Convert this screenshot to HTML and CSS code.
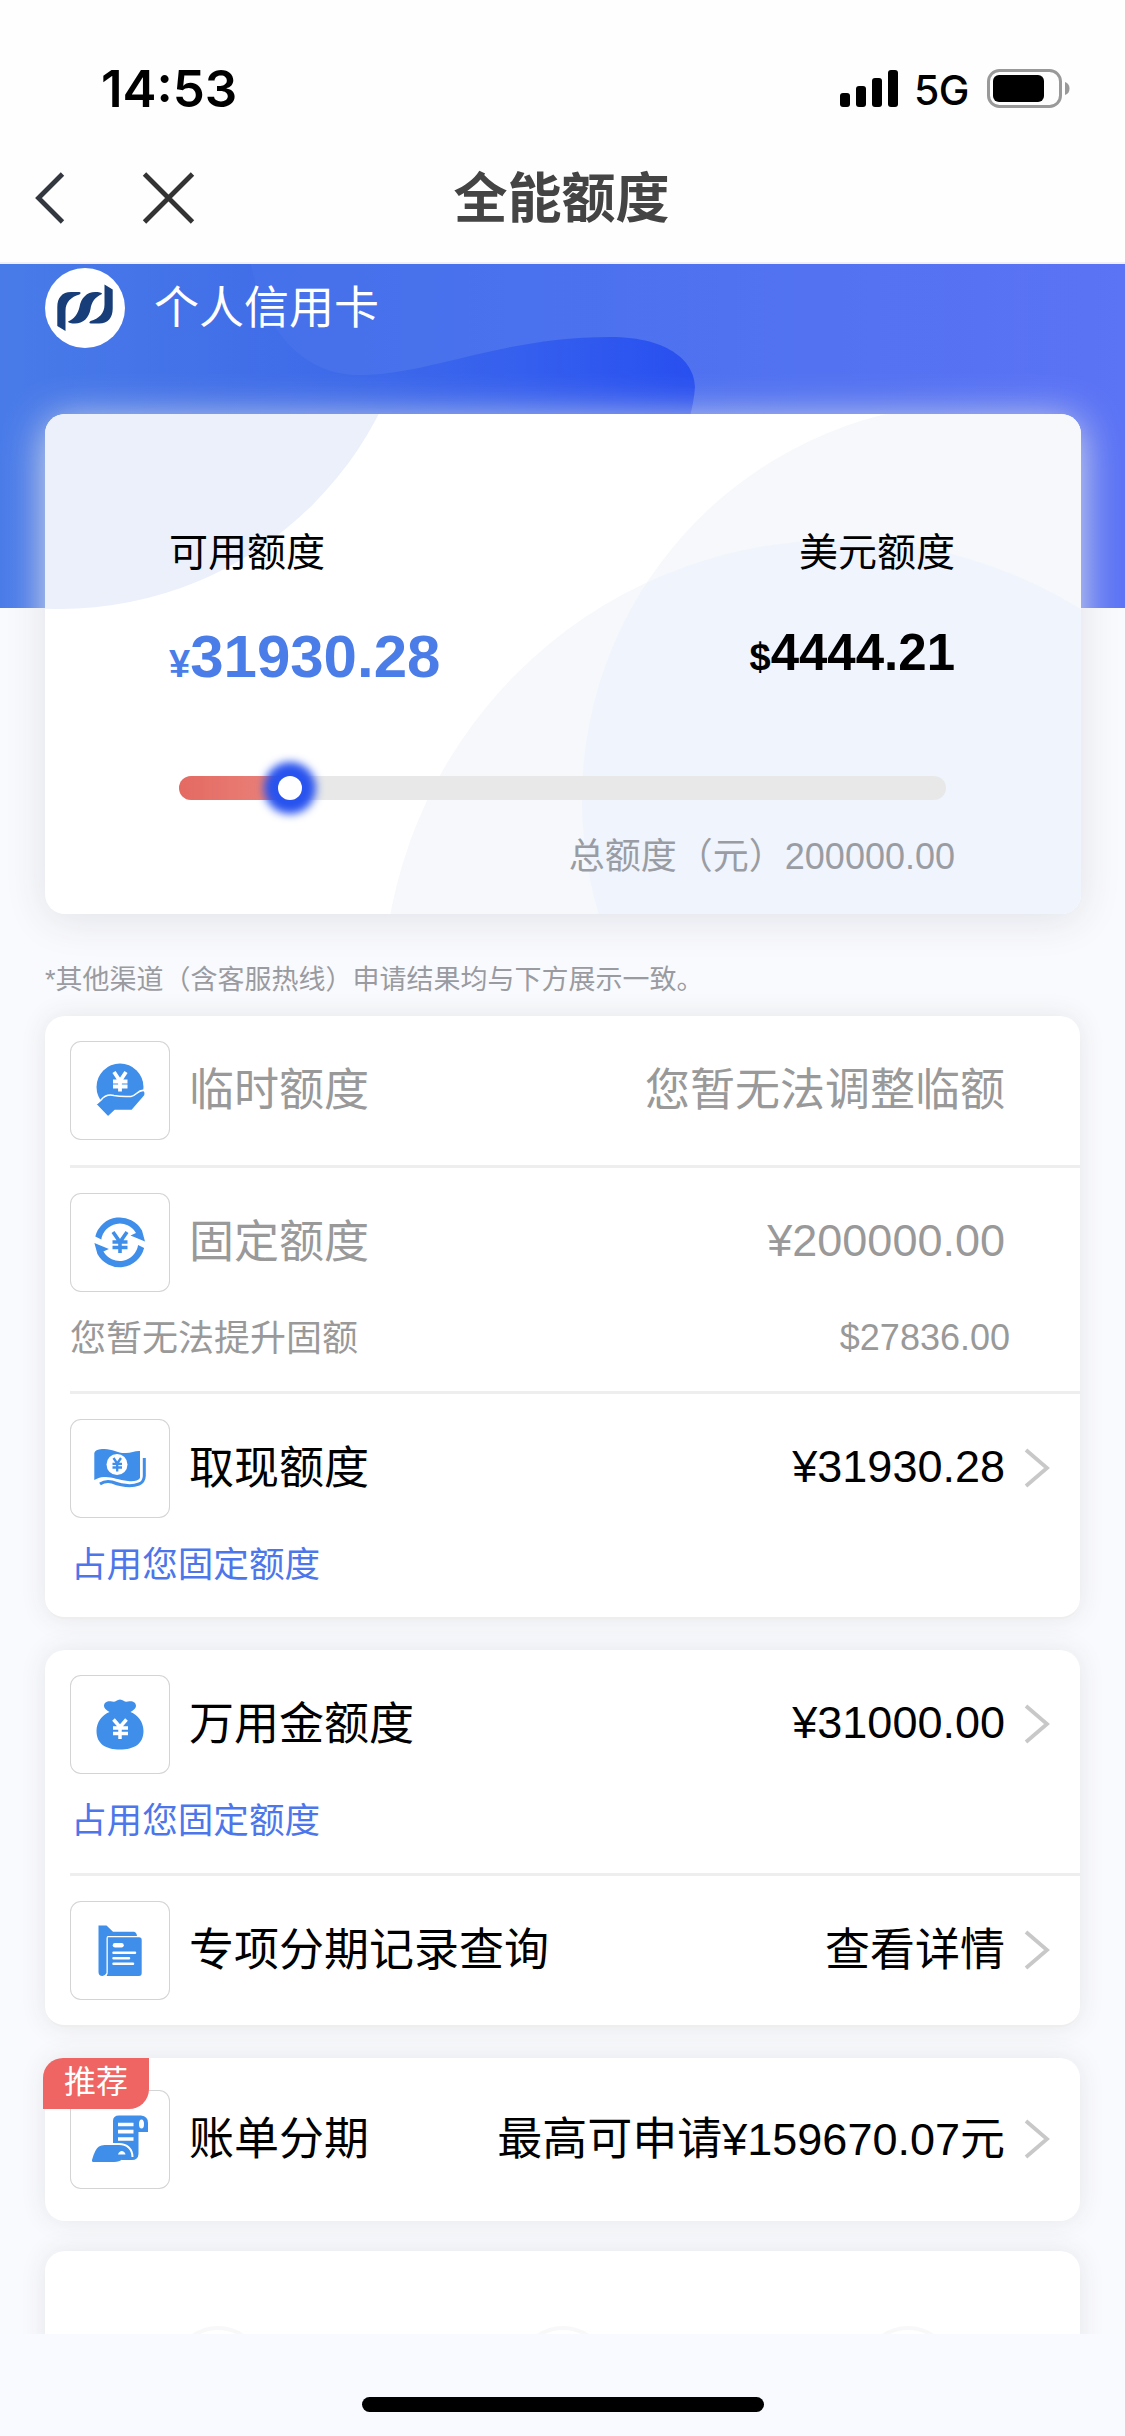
FILE: index.html
```html
<!DOCTYPE html>
<html lang="zh-CN">
<head>
<meta charset="utf-8">
<title>全能额度</title>
<link rel="stylesheet" href="styles.css">
</head>
<body>
<div class="screen">
  <header class="top">
    <div class="status">
      <span class="time">14:53</span>
      <div class="status-right">
        <svg class="signal" width="58" height="38" viewBox="0 0 58 38">
          <rect x="0" y="23" width="10" height="14" rx="3"/><rect x="16" y="16" width="10" height="21" rx="3"/>
          <rect x="32" y="8" width="10" height="29" rx="3"/><rect x="48" y="0" width="10" height="37" rx="3"/>
        </svg>
        <span class="net">5G</span>
        <svg class="battery" width="84" height="40" viewBox="0 0 84 40">
          <rect x="1.500" y="1.500" width="72" height="36" rx="11" fill="none" stroke="#999" stroke-width="3"/>
          <rect x="6" y="6" width="51" height="27" rx="6"/>
          <path d="M78 13q4.500 1.500 4.500 6.500t-4.500 6.500z" fill="#999"/>
        </svg>
      </div>
    </div>
    <nav class="nav">
      <svg class="nav-icons" width="162" height="52" viewBox="0 0 162 52" fill="none" stroke="#333740" stroke-width="4.800">
        <path d="M29.500 2L5.500 26L29.500 50"/><path d="M111.500 2L159.500 50M159.500 2L111.500 50" stroke="#333"/>
      </svg>
      <h1 class="title">全能额度</h1>
      <span class="nav-space"></span>
    </nav>
  </header>

  <main class="content">
    <section class="hero">
      <svg class="hero-bg" width="1125" height="344" viewBox="0 264 1125 344">
        <defs>
          <linearGradient id="deep" gradientUnits="userSpaceOnUse" x1="0" x2="694" y1="0" y2="0"><stop offset="0" stop-color="#497be8"/><stop offset=".5" stop-color="#3e6ae9"/><stop offset=".75" stop-color="#355fee"/><stop offset="1" stop-color="#284ff0"/></linearGradient>
          <linearGradient id="soft" gradientUnits="userSpaceOnUse" x1="250" x2="1125" y1="0" y2="0"><stop offset="0" stop-color="#4571ea"/><stop offset=".3" stop-color="#4a71ee"/><stop offset="1" stop-color="#5b73f5"/></linearGradient>
        </defs>
        <rect y="264" width="1125" height="344" fill="url(#deep)"/>
        <path fill="url(#soft)" d="M251 264C262 325 300 375 359 375C430 375 500 337 610 337C672 337 695 364 695 387Q694 402 689 420L660 608H1125V264Z"/>
      </svg>
      <div class="brand">
        <svg class="logo" width="80" height="80" viewBox="0 0 80 80">
          <circle cx="40" cy="40" r="40" fill="#fff"/>
          <g fill="#173e78">
            <path d="M12.300 58V39C12.300 30 17 24 26 24H34Q37 24.500 34.500 26.500C26 29 20.500 34 20.500 43V63Z"/>
            <path d="M12.300 58V39C12.300 30 17 24 26 24H34Q37 24.500 34.500 26.500C26 29 20.500 34 20.500 43V63Z" transform="rotate(180 40 39.800)"/>
            <path d="M23 53.500C29 51 33 46 34.500 39C36 30 42 24 50 24C54 24 57 24.500 57 26C50 29 46.500 34 45.500 41C44 50 38 55.500 30 55.500C26 55.500 23.500 55 23 53.500Z"/>
          </g>
        </svg>
        <span class="brand-name">个人信用卡</span>
      </div>
      <div class="limit">
        <svg class="limit-bg" width="1036" height="500" viewBox="45 414 1036 500">
          <clipPath id="lens"><circle cx="979" cy="800" r="397"/></clipPath>
          <circle cx="60" cy="251" r="358" fill="#ebf0fb"/>
          <circle cx="979" cy="800" r="397" fill="#f6f8fb"/>
          <circle cx="839" cy="996" r="456" fill="#f6f8fc"/>
          <circle cx="839" cy="996" r="456" fill="#f0f4fd" clip-path="url(#lens)"/>
        </svg>
        <div class="limit-body">
          <div class="amounts">
            <div class="amount"><span class="amount-label">可用额度</span><span class="money cny"><small>¥</small>31930.28</span></div>
            <div class="amount right"><span class="amount-label">美元额度</span><span class="money usd"><small>$</small>4444.21</span></div>
          </div>
          <div class="track"><div class="used"></div><div class="knob"></div></div>
          <p class="total">总额度（元）200000.00</p>
        </div>
      </div>
    </section>

    <p class="note">*其他渠道（含客服热线）申请结果均与下方展示一致。</p>

    <section class="card">
      <div class="row muted">
        <div class="line">
          <svg class="icon" viewBox="0 0 100 99">
            <circle cx="50" cy="46" r="23.500"/>
            <path class="w" d="M44 31L50 40L56 31M50 40V50.500M43 40.500H57.500M43 45.500H57.500" stroke-width="3.800"/>
            <path d="M26 63.500L31 59C35 54 40 53.500 44 54.500C51 56 56 55.500 61 55.500C66 55 68 48.500 74 49.500Q76 51 75 54.500L62 69.500H45L38 76Z" stroke="#fff" stroke-width="1.600"/>
          </svg>
          <span class="label">临时额度</span><span class="value">您暂无法调整临额</span>
        </div>
      </div>
      <div class="row muted">
        <div class="line">
          <svg class="icon" viewBox="0 0 100 99">
            <path d="M25.300 43.500A25.300 25.300 0 0 1 72 37.500L75 48.500L60.500 42.500L66 40A18.700 18.700 0 0 0 31.300 46.500Z"/>
            <path d="M25.300 43.500A25.300 25.300 0 0 1 72 37.500L75 48.500L60.500 42.500L66 40A18.700 18.700 0 0 0 31.300 46.500Z" transform="rotate(180 49.700 49.300)"/>
            <path class="b" d="M43 39L50 49L57 39M50 49V60M42.500 49H57.500M42.500 54.500H57.500" stroke-width="3.600"/>
          </svg>
          <span class="label">固定额度</span><span class="value num">¥200000.00</span>
        </div>
        <div class="sub"><span>您暂无法提升固额</span><span class="usd-sub">$27836.00</span></div>
      </div>
      <div class="row">
        <div class="line">
          <svg class="icon" viewBox="0 0 100 99">
            <path d="M24.300 34Q25 30.500 32 30C42 29 47 34.500 56 34C61 34 66 31.500 70 32V59Q67 63 58 62C48 61 42 57.500 34 58C30 58 27 59.500 24.300 61Z"/>
            <circle cx="47" cy="45.500" r="10.500" fill="#fff"/>
            <path class="b" d="M43.500 39L47.200 44.500L51 39M47.200 44.500V52.500M42.500 44.800H52M42.500 48.500H52" stroke-width="2.300"/>
            <path class="b" d="M74.300 39V57Q74 63 69 65C59 69 46 64.500 42 63C36 61.500 33 63 30 65" stroke-width="3"/>
          </svg>
          <span class="label">取现额度</span><span class="value num">¥31930.28</span>
          <svg class="go" viewBox="0 0 26 40"><path d="M2 2L23 20L2 38"/></svg>
        </div>
        <div class="sub link"><span>占用您固定额度</span></div>
      </div>
    </section>

    <section class="card">
      <div class="row">
        <div class="line">
          <svg class="icon" viewBox="0 0 100 99">
            <path d="M39.500 37C36 35 34 33 34 31C34 27 38 25.500 42 26.500Q45 27 46 26Q50 23 54 26Q55 27 58 26.500C62 25.500 66 27 66 31C66 33 64 35 60.500 37C68 40 73.500 47 73.500 56C73.500 69 64 74.500 50 74.500S26.500 69 26.500 56C26.500 47 32 40 39.500 37Z"/>
            <path class="w" d="M43.500 44.500L50 52L56.500 44.500M50 52V64M43 53H58M43 58.500H58" stroke-width="3.500"/>
          </svg>
          <span class="label">万用金额度</span><span class="value num">¥31000.00</span>
          <svg class="go" viewBox="0 0 26 40"><path d="M2 2L23 20L2 38"/></svg>
        </div>
        <div class="sub link"><span>占用您固定额度</span></div>
      </div>
      <div class="row">
        <div class="line">
          <svg class="icon" viewBox="0 0 100 99">
            <path d="M28.500 24.500H36.500L43 30.700H64Q66.500 31 67 35H38Q36.500 35 36.500 38V72Q35 75 32.500 75Q28.500 75 28.500 71Z"/>
            <path d="M37.800 36.200H69Q71.700 36.200 71.700 39V72Q71.700 75 69 75H36.500Q38 73 37.800 71Z"/>
            <path class="w" d="M45 44.300H51.500" stroke-width="4.500" stroke-linecap="round"/>
            <path class="w" d="M43.500 51.700H65M43.500 57.300H59M43.500 62.800H63" stroke-width="2.500" stroke-linecap="round"/>
          </svg>
          <span class="label">专项分期记录查询</span><span class="value">查看详情</span>
          <svg class="go" viewBox="0 0 26 40"><path d="M2 2L23 20L2 38"/></svg>
        </div>
      </div>
    </section>

    <section class="card single">
      <span class="tag">推荐</span>
      <div class="row">
        <div class="line">
          <svg class="icon" viewBox="0 0 100 99">
            <path d="M43 31Q43 25.500 49 25.500H71Q78 26 78 33V42H68.500V64Q68 70 62 70H52L43 57Z"/>
            <path d="M22 70Q25 59 29 56.500Q31 55 35 55H50C58 55 62 60 62 66.500C60 64.500 57 66 54 68Q50 72 44 72H24Q21.500 72 22 70Z"/>
            <path d="M43 54H49C57 54 62.500 59 62.500 67" fill="none" stroke="#fff" stroke-width="2"/>
            <path d="M48 64.500Q49 61 52 61Q55 61.500 55.500 64.500Z" fill="#fff"/>
            <path class="w" d="M48 34.500H63.500M48 41.700H63.500M48 49H63.500" stroke-width="3.700"/>
            <ellipse cx="71.500" cy="34" rx="2.500" ry="4.500" fill="#fff"/>
          </svg>
          <span class="label">账单分期</span><span class="value">最高可申请¥159670.07元</span>
          <svg class="go" viewBox="0 0 26 40"><path d="M2 2L23 20L2 38"/></svg>
        </div>
      </div>
    </section>

    <section class="card steps"><i></i><i></i><i></i></section>
  </main>
  <footer class="home"><div class="bar"></div></footer>
</div>
</body>
</html>
```
FILE: styles.css
```css
* { box-sizing: border-box; }
body {
  margin: 0;
  background: #f9fafd;
  color: #000;
  font-family: "Liberation Sans", "Noto Sans CJK SC", sans-serif;
}
h1, p { margin: 0; }
svg { display: block; flex: none; }
.screen { width: 1125px; height: 2436px; display: flex; flex-direction: column; overflow: hidden; }

.top { height: 264px; flex: none; background: #fefefe; border-bottom: 2px solid #f2eff8; }
.status { height: 132px; padding: 45px 54px 0 101px; display: flex; justify-content: space-between; align-items: center; font-family: Inter, sans-serif; }
.time { font-size: 51px; font-weight: 600; line-height: 60px; }
.status-right { display: flex; align-items: center; height: 60px; }
.net { font-size: 41px; font-weight: 500; line-height: 60px; margin: 2px 0 0 16px; width: 73px; letter-spacing: -0.5px; }
.nav { height: 132px; padding: 0 33px; display: flex; align-items: center; justify-content: space-between; }
.nav-space { width: 164px; }
.title { font-size: 54px; font-weight: 600; line-height: 80px; color: #444; margin-top: 2px; }

.content { height: 2070px; flex: none; overflow: hidden; }
.hero { position: relative; height: 650px; }
.hero-bg { position: absolute; left: 0; top: 0; }
.brand { position: relative; height: 150px; padding: 4px 45px 0; display: flex; align-items: flex-start; gap: 29px; }
.brand-name { color: #fff; font-size: 45px; line-height: 82px; }
.limit { position: relative; width: 1036px; height: 500px; margin-left: 45px; border-radius: 20px; background: #fff; box-shadow: 0 6px 42px #e0e2e8; }
.limit-bg { position: absolute; left: 0; top: 0; border-radius: 20px; }
.limit-body { position: relative; padding: 109px 126px 0 124px; }
.amounts { display: flex; justify-content: space-between; height: 253px; }
.amount { display: flex; flex-direction: column; }
.amount.right { align-items: flex-end; }
.amount-label { font-size: 39px; line-height: 60px; }
.money { font-weight: 700; white-space: nowrap; }
.money small { font-size: 38px; }
.cny { font-size: 60px; line-height: 70px; color: #4a7de8; margin-top: 39px; }
.usd { font-size: 51px; line-height: 60px; margin-top: 40px; }
.track { position: relative; width: 767px; height: 24px; margin-left: 10px; border-radius: 12px; background: #e8e8e8; display: flex; align-items: center; }
.used { width: 111px; height: 24px; border-radius: 12px 0 0 12px; background: linear-gradient(90deg, #e46a62, #ea857d); }
.knob { width: 24px; height: 24px; margin-left: -12px; border-radius: 50%; background: #fff; box-shadow: 0 0 9px 14px #2953ee; }
.total { margin-top: 32px; text-align: right; font-size: 36px; line-height: 50px; color: #999da3; }
.note { height: 102px; padding: 46px 0 0 45px; font-size: 27px; line-height: 40px; color: #999ba0; }

.card { position: relative; width: 1035px; margin: 0 0 31px 45px; border-radius: 20px; background: #fff; border-bottom: 2px solid #eee; box-shadow: 0 0 26px #e4e6ea; }
.row { padding: 25px 0 0 25px; position: relative; }
.row + .row { padding-top: 28px; }
.row + .row::before { content: ""; position: absolute; left: 25px; right: 0; top: 0; height: 3px; background: #eee; }
.line { display: flex; align-items: center; height: 124px; padding: 0 30px 25px 0; font-size: 45px; }
.icon { width: 100px; height: 99px; border-radius: 11px; box-shadow: inset 0 0 0 1px #d4d4d4; fill: #3e8eea; }
.icon .w, .icon .b { fill: none; stroke: #fff; }
.icon .b { stroke: #3e8eea; }
.label { margin-left: 19px; line-height: 60px; }
.value { margin-left: auto; margin-right: 45px; line-height: 60px; white-space: nowrap; }
.value:has(+ .go) { margin-right: 19px; }
.num { padding-bottom: 4px; }
.go { width: 26px; height: 40px; margin-bottom: 2px; fill: none; stroke: #c8c8c8; stroke-width: 3.8; }
.sub { display: flex; justify-content: space-between; height: 74px; padding-right: 70px; font-size: 36px; line-height: 44px; }
.usd-sub { line-height: 41px; }
.muted { color: #999; }
.link { color: #4c76ea; font-size: 35.6px; padding-left: 1px; }
.single { padding: 7px 0; height: 163px; margin-bottom: 30px; border-bottom: 0; }
.tag { position: absolute; z-index: 2; left: -2px; top: 0; width: 106px; height: 51px; border-radius: 20px 0 20px 0; background: #ee6563; color: #fff; font-size: 32px; line-height: 49px; text-align: center; }
.steps { height: 120px; padding-top: 75px; display: flex; justify-content: space-between; padding-left: 128px; padding-right: 127px; border: 0; }
.steps i { width: 90px; height: 90px; border-radius: 50%; border: 4px solid #f8f8f9; }
.home { flex: 1; background: #f8faff; display: flex; justify-content: center; padding-top: 63px; }
.bar { width: 402px; height: 15px; border-radius: 8px; background: #000; }
```
